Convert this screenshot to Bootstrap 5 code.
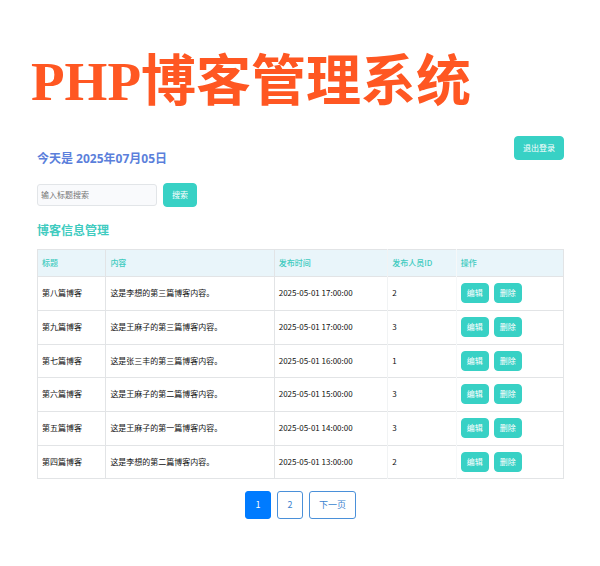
<!DOCTYPE html>
<html lang="zh-CN">
<head>
<meta charset="utf-8">
<meta name="viewport" content="width=device-width, initial-scale=1">
<title>PHP博客管理系统</title>
<link href="https://cdn.jsdelivr.net/npm/bootstrap@5.3.0/dist/css/bootstrap.min.css" rel="stylesheet">
<style>
  body { font-family: "Noto Sans CJK SC", sans-serif; font-size: 8px; line-height: 12px; color: #111; background: #fff; }
  .site-title { font: bold 55px/60px "Liberation Serif", "Noto Sans CJK SC", serif; color: #ff5722; padding: 52px 0 0 31px; white-space: nowrap; }
  .page-body { padding: 24px 36px 40px 37px; }
  .today { font: bold 12px/16px "Noto Sans", "Noto Sans CJK SC", sans-serif; color: #5b7fdb; padding-top: 15px; }
  .section-title { font-size: 12px; line-height: 16px; font-weight: bold; color: #40cbbf; margin: 15px 0 11px; }
  .btn-teal { --bs-btn-color: #fff; --bs-btn-bg: #38d1c5; --bs-btn-border-color: #38d1c5; --bs-btn-hover-color: #fff; --bs-btn-hover-bg: #2bbcb0; --bs-btn-hover-border-color: #2bbcb0; --bs-btn-font-size: 8px; --bs-btn-line-height: 12px; --bs-btn-border-radius: 4px; --bs-btn-padding-x: 8px; --bs-btn-padding-y: 5px; }
  .btn-row { --bs-btn-padding-x: 5px; --bs-btn-padding-y: 3px; }
  .row-actions { gap: 5px; }
  .search-form { gap: 6px; }
  .search-box { width: 120px; font-size: 8px; line-height: 12px; padding: 4px 3px; min-height: 0; border-color: #e2e5e8; border-radius: 3px; background: #f9fafc; }
  .search-box::placeholder { color: #757575; }
  .posts { --bs-table-color: #111; table-layout: fixed; border-color: #e2e4e6; }
  .posts > :not(caption) > * > * { padding: 0 4px; }
  .posts thead th { height: 27px; background: #e9f5fa; color: #40cbbf; font-weight: 500; vertical-align: middle; }
  .posts tbody td { height: 34px; padding-bottom: 1px; }
  .posts tbody tr:nth-child(3n) td { height: 33px; }
  .posts tr > :nth-child(4) { border-left-color: #f1f3f4; border-right-color: #f6f8f9; }
  .posts tr > :nth-child(3) { border-right-color: #f1f3f4; }
  .posts tr > :nth-child(5) { border-left-color: #f6f8f9; }
  .pager { --bs-pagination-font-size: 9px; --bs-pagination-padding-x: 9px; --bs-pagination-padding-y: 7px; --bs-pagination-color: #3b82cf; --bs-pagination-border-color: #4a90d9; --bs-pagination-active-bg: #007bff; --bs-pagination-active-border-color: #007bff; gap: 6px; margin-top: 12px; }
  .pager .page-link { min-width: 26px; line-height: 12px; text-align: center; }
  .pager .page-item .page-link { margin-left: 0; border-radius: 3px; }
</style>
</head>
<body>
<header><h1 class="site-title m-0">PHP博客管理系统</h1></header>
<main class="page-body">
  <div class="d-flex justify-content-between align-items-start">
    <h2 class="today mb-0">今天是 2025年07月05日</h2>
    <button type="button" class="btn btn-teal">退出登录</button>
  </div>
  <form class="d-flex align-items-center mt-3 search-form">
    <input type="text" class="form-control search-box" placeholder="输入标题搜索" aria-label="输入标题搜索">
    <button type="submit" class="btn btn-teal">搜索</button>
  </form>
  <h3 class="section-title">博客信息管理</h3>
  <table class="table table-bordered align-middle posts mb-0">
    <colgroup><col style="width:13%"><col style="width:32%"><col style="width:21.6%"><col style="width:13%"><col></colgroup>
    <thead><tr><th>标题</th><th>内容</th><th>发布时间</th><th>发布人员ID</th><th>操作</th></tr></thead>
    <tbody>
      <tr><td>第八篇博客</td><td>这是李想的第三篇博客内容。</td><td>2025-05-01 17:00:00</td><td>2</td><td><div class="d-flex row-actions"><button type="button" class="btn btn-teal btn-row">编辑</button><button type="button" class="btn btn-teal btn-row">删除</button></div></td></tr>
      <tr><td>第九篇博客</td><td>这是王麻子的第三篇博客内容。</td><td>2025-05-01 17:00:00</td><td>3</td><td><div class="d-flex row-actions"><button type="button" class="btn btn-teal btn-row">编辑</button><button type="button" class="btn btn-teal btn-row">删除</button></div></td></tr>
      <tr><td>第七篇博客</td><td>这是张三丰的第三篇博客内容。</td><td>2025-05-01 16:00:00</td><td>1</td><td><div class="d-flex row-actions"><button type="button" class="btn btn-teal btn-row">编辑</button><button type="button" class="btn btn-teal btn-row">删除</button></div></td></tr>
      <tr><td>第六篇博客</td><td>这是王麻子的第二篇博客内容。</td><td>2025-05-01 15:00:00</td><td>3</td><td><div class="d-flex row-actions"><button type="button" class="btn btn-teal btn-row">编辑</button><button type="button" class="btn btn-teal btn-row">删除</button></div></td></tr>
      <tr><td>第五篇博客</td><td>这是王麻子的第一篇博客内容。</td><td>2025-05-01 14:00:00</td><td>3</td><td><div class="d-flex row-actions"><button type="button" class="btn btn-teal btn-row">编辑</button><button type="button" class="btn btn-teal btn-row">删除</button></div></td></tr>
      <tr><td>第四篇博客</td><td>这是李想的第二篇博客内容。</td><td>2025-05-01 13:00:00</td><td>2</td><td><div class="d-flex row-actions"><button type="button" class="btn btn-teal btn-row">编辑</button><button type="button" class="btn btn-teal btn-row">删除</button></div></td></tr>
    </tbody>
  </table>
  <nav aria-label="分页">
    <ul class="pagination pager justify-content-center mb-0">
      <li class="page-item active"><a class="page-link" href="#" aria-current="page">1</a></li>
      <li class="page-item"><a class="page-link" href="#">2</a></li>
      <li class="page-item"><a class="page-link" href="#">下一页</a></li>
    </ul>
  </nav>
</main>
<script src="https://cdn.jsdelivr.net/npm/bootstrap@5.3.0/dist/js/bootstrap.bundle.min.js"></script>
</body>
</html>
